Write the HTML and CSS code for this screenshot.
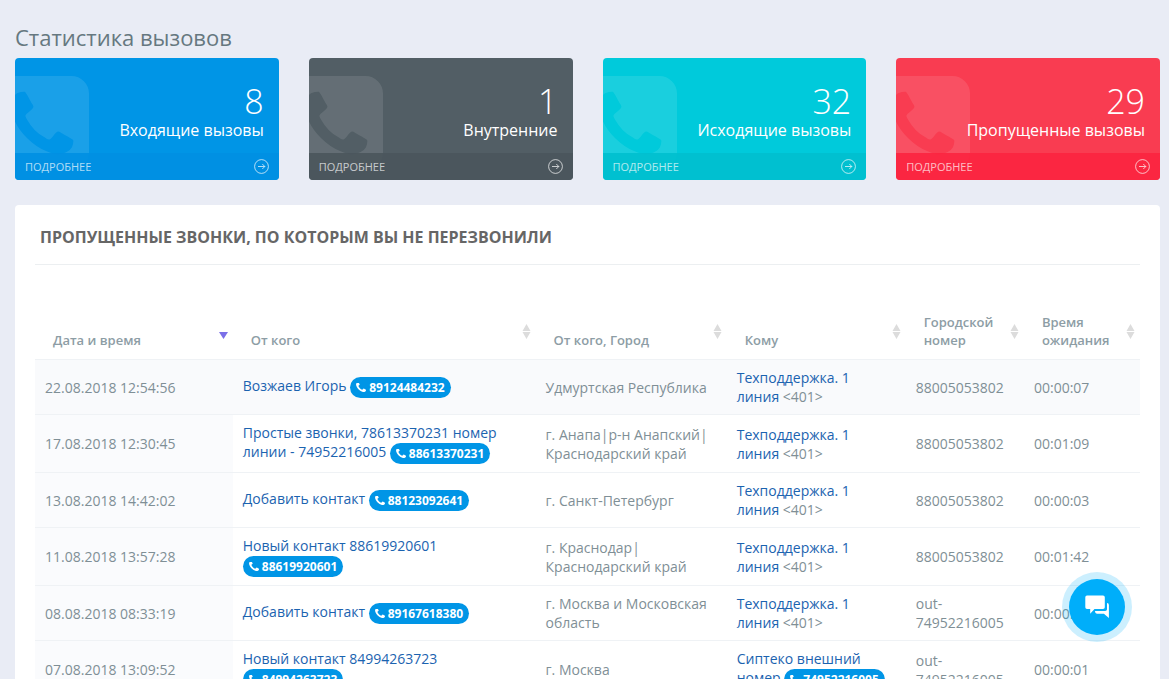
FILE: index.html
```html
<!DOCTYPE html>
<html lang="ru">
<head>
<meta charset="utf-8">
<meta name="viewport" content="width=device-width, initial-scale=1">
<title>Статистика вызовов</title>
<link rel="stylesheet" href="styles.css">
</head>
<body>
<svg class="sprite" aria-hidden="true">
  <symbol id="phone" viewBox="192 256 1408 1408"><path d="M1600 1240q0 27-10 70.5t-11 68.5q-21 50-122 106-94 51-186 51-27 0-53-3.5t-57-12.5-47-14.5-55.5-20.5-49.5-18q-98-35-175-83-127-79-264-216t-216-264q-48-77-83-175-3-9-18-49.5t-20.5-55.5-14.5-47-12.5-57-3.5-53q0-92 51-186 56-101 106-122 25-11 68.5-21t70.5-10q14 0 21 3 18 6 53 76 11 19 30 54t35 63.500 31 53.500q3 4 17.500 25t21.500 35.500 7 28.500q0 20-28.500 50t-62 55-62 53-28.500 46q0 9 5 22.500t8.500 20.500 14 24 11.500 19q76 137 174 235t235 174q2 1 19 11.500t24 14 20.500 8.500 22.500 5q18 0 46-28.500t53-62 55-62 50-28.500q14 0 28.500 7t35.500 21.500 25 17.500q25 15 53.500 31t63.500 35 54 30q70 35 76 53 3 7 3 21z"/></symbol>
  <symbol id="phone-square" viewBox="128 128 1536 1536"><path d="M1408 1193q0-11-2-16t-18-16.500-40.500-25-47.500-26.500-45.500-25-28.500-15q-5-3-19-13t-25-15-21-5q-15 0-36.500 20.500t-39.500 45-38.500 45-33.500 20.500q-7 0-16.500-3.500t-15.500-6.500-17-9.500-14-8.500q-99-55-170-126.500t-127-170.500q-2-3-8.500-14t-9.500-17-6.500-15.500-3.500-16.500q0-13 20.500-33.500t45-38.500 45-39.500 20.500-36.500q0-10-5-21t-15-25-13-19q-3-6-15-28.500t-25-45.500-26.500-47.500-25-40.500-16.500-18-16-2q-48 0-101 22-46 21-80 94.500t-34 130.500q0 16 2.500 34t5 30.500 9 33 10 29.500 12.500 33 11 30q60 164 216.500 320.500t320.500 216.500q6 2 30 11t33 12.500 29.500 10 33 9 30.500 5 34 2.500q57 0 130.500-34t94.500-80q22-53 22-101zm256-777v960q0 119-84.500 203.500t-203.500 84.500h-960q-119 0-203.500-84.500t-84.500-203.500v-960q0-119 84.500-203.500t203.500-84.500h960q119 0 203.500 84.500t84.500 203.500z"/></symbol>
  <symbol id="go" viewBox="0 0 15 15"><g fill="none" stroke="currentColor"><circle cx="7.500" cy="7.500" r="6.900"/><path d="M4 7.500h6.800M8.300 5l2.500 2.500L8.300 10"/></g></symbol>
  <symbol id="sort" viewBox="0 0 9 15"><path d="M4.500 0L8.500 7H.5zM4.500 15L8.500 8H.5z"/></symbol>
  <symbol id="sort-desc" viewBox="0 0 9 15"><path d="M4.500 15L9 8H0z"/></symbol>
</svg>

<main class="page">
  <h1 class="page-title">Статистика вызовов</h1>

  <section class="stats">
    <article class="stat stat-blue">
      <svg class="stat-icon" aria-hidden="true"><use href="#phone-square"/></svg>
      <div class="stat-body"><div class="stat-number">8</div><div class="stat-label">Входящие вызовы</div></div>
      <a class="stat-more" href="#">Подробнее <svg class="go" aria-hidden="true"><use href="#go"/></svg></a>
    </article>
    <article class="stat stat-grey">
      <svg class="stat-icon" aria-hidden="true"><use href="#phone-square"/></svg>
      <div class="stat-body"><div class="stat-number">1</div><div class="stat-label">Внутренние</div></div>
      <a class="stat-more" href="#">Подробнее <svg class="go" aria-hidden="true"><use href="#go"/></svg></a>
    </article>
    <article class="stat stat-cyan">
      <svg class="stat-icon" aria-hidden="true"><use href="#phone-square"/></svg>
      <div class="stat-body"><div class="stat-number">32</div><div class="stat-label">Исходящие вызовы</div></div>
      <a class="stat-more" href="#">Подробнее <svg class="go" aria-hidden="true"><use href="#go"/></svg></a>
    </article>
    <article class="stat stat-red">
      <svg class="stat-icon" aria-hidden="true"><use href="#phone-square"/></svg>
      <div class="stat-body"><div class="stat-number">29</div><div class="stat-label">Пропущенные вызовы</div></div>
      <a class="stat-more" href="#">Подробнее <svg class="go" aria-hidden="true"><use href="#go"/></svg></a>
    </article>
  </section>

  <section class="panel">
    <h2 class="panel-title">Пропущенные звонки, по которым вы не перезвонили</h2>
    <table class="calls">
      <colgroup><col class="col-date"><col class="col-from"><col class="col-city"><col class="col-to"><col class="col-line"><col class="col-wait"></colgroup>
      <thead>
        <tr>
          <th aria-sort="descending"><button class="sorter sorted" type="button"><span>Дата и время</span><svg class="sort" aria-hidden="true"><use href="#sort-desc"/></svg></button></th>
          <th><button class="sorter" type="button"><span>От кого</span><svg class="sort" aria-hidden="true"><use href="#sort"/></svg></button></th>
          <th><button class="sorter" type="button"><span>От кого, Город</span><svg class="sort" aria-hidden="true"><use href="#sort"/></svg></button></th>
          <th><button class="sorter" type="button"><span>Кому</span><svg class="sort" aria-hidden="true"><use href="#sort"/></svg></button></th>
          <th><button class="sorter" type="button"><span>Городской номер</span><svg class="sort" aria-hidden="true"><use href="#sort"/></svg></button></th>
          <th><button class="sorter" type="button"><span>Время ожидания</span><svg class="sort" aria-hidden="true"><use href="#sort"/></svg></button></th>
        </tr>
      </thead>
      <tbody>
        <tr class="active">
          <td>22.08.2018 12:54:56</td>
          <td><a href="#">Возжаев Игорь</a> <a class="call" href="#"><svg class="phone" aria-hidden="true"><use href="#phone"/></svg>89124484232</a></td>
          <td>Удмуртская Республика</td>
          <td><a href="#">Техподдержка. 1 линия</a>&nbsp;&lt;401&gt;</td>
          <td>88005053802</td>
          <td>00:00:07</td>
        </tr>
        <tr>
          <td>17.08.2018 12:30:45</td>
          <td><a href="#">Простые звонки, 78613370231 номер линии - 74952216005</a> <a class="call" href="#"><svg class="phone" aria-hidden="true"><use href="#phone"/></svg>88613370231</a></td>
          <td>г. Анапа|р-н Анапский|<wbr>Краснодарский край</td>
          <td><a href="#">Техподдержка. 1 линия</a>&nbsp;&lt;401&gt;</td>
          <td>88005053802</td>
          <td>00:01:09</td>
        </tr>
        <tr>
          <td>13.08.2018 14:42:02</td>
          <td><a href="#">Добавить контакт</a> <a class="call" href="#"><svg class="phone" aria-hidden="true"><use href="#phone"/></svg>88123092641</a></td>
          <td>г. Санкт-Петербург</td>
          <td><a href="#">Техподдержка. 1 линия</a>&nbsp;&lt;401&gt;</td>
          <td>88005053802</td>
          <td>00:00:03</td>
        </tr>
        <tr>
          <td>11.08.2018 13:57:28</td>
          <td><a href="#">Новый контакт 88619920601</a> <a class="call" href="#"><svg class="phone" aria-hidden="true"><use href="#phone"/></svg>88619920601</a></td>
          <td>г. Краснодар|<wbr>Краснодарский край</td>
          <td><a href="#">Техподдержка. 1 линия</a>&nbsp;&lt;401&gt;</td>
          <td>88005053802</td>
          <td>00:01:42</td>
        </tr>
        <tr>
          <td>08.08.2018 08:33:19</td>
          <td><a href="#">Добавить контакт</a> <a class="call" href="#"><svg class="phone" aria-hidden="true"><use href="#phone"/></svg>89167618380</a></td>
          <td>г. Москва и Московская область</td>
          <td><a href="#">Техподдержка. 1 линия</a>&nbsp;&lt;401&gt;</td>
          <td>out-<wbr>74952216005</td>
          <td>00:00:04</td>
        </tr>
        <tr>
          <td>07.08.2018 13:09:52</td>
          <td><a href="#">Новый контакт 84994263723</a> <a class="call" href="#"><svg class="phone" aria-hidden="true"><use href="#phone"/></svg>84994263723</a></td>
          <td>г. Москва</td>
          <td><a href="#">Сиптеко внешний номер</a> <a class="call" href="#"><svg class="phone" aria-hidden="true"><use href="#phone"/></svg>74952216005</a></td>
          <td>out-<wbr>74952216005</td>
          <td>00:00:01</td>
        </tr>
      </tbody>
    </table>
  </section>
</main>

<button class="chat" type="button" aria-label="Чат">
  <svg class="chat-icon" viewBox="0 0 24 24" aria-hidden="true"><path d="M2 .5h16q1.800 0 1.800 1.800v10q0 1.800-1.800 1.800H9.500L5.200 18.800V14.100H2Q.3 14.100.3 12.300v-10Q.3.500 2 .5zM22 8q1.900.2 1.900 2v13l-5-4.300h-7q-1.800 0-2-2.600h10.300q1.800 0 1.800-1.800z"/></svg>
</button>
</body>
</html>
```

FILE: styles.css
```css
* { box-sizing: border-box; }

body {
  margin: 0;
  background: #e9ecf5;
  color: #7f8f96;
  font: 14px/19px "Open Sans", "Noto Sans", sans-serif;
}

a { color: #1b63b0; text-decoration: none; }

.sprite { display: none; }

.page { padding: 20px 9px 20px 15px; }

.page-title {
  margin: 0 0 4px;
  color: #667880;
  font-size: 22px;
  font-weight: 400;
  line-height: 34px;
}

/* Stat cards */
.stats {
  display: grid;
  grid-template-columns: repeat(4, 1fr);
  gap: 30px;
  margin-bottom: 25px;
}

.stat {
  position: relative;
  display: flex;
  flex-direction: column;
  overflow: hidden;
  border-radius: 4px;
  color: #fff;
}

.stat-blue { background: #0095e6; --footer: #008fe2; }
.stat-grey { background: #525e65; --footer: #4a555c; }
.stat-cyan { background: #00cadb; --footer: #00bfce; }
.stat-red { background: #f93c51; --footer: #fb243f; }

.stat-icon {
  position: absolute;
  top: 18px;
  left: -20px;
  width: 94px;
  height: 94px;
  fill: #fff;
  opacity: .1;
}

.stat-body {
  padding: 25px 15px 12px;
  text-align: right;
}

.stat-number {
  font-size: 34px;
  font-weight: 300;
  line-height: 36px;
}

.stat-label {
  font-size: 16px;
  line-height: 22px;
}

.stat-more {
  position: relative;
  z-index: 1;
  display: flex;
  align-items: center;
  justify-content: space-between;
  padding: 6px 10px;
  color: rgba(255, 255, 255, .7);
  font-size: 11px;
  line-height: 15px;
  text-transform: uppercase;
}

.stat-more::before {
  content: "";
  position: absolute;
  inset: 0;
  z-index: -1;
  background: var(--footer);
  opacity: .9;
}

.go { width: 15px; height: 15px; }

/* Table panel */
.panel {
  padding: 12px 20px 20px;
  border-radius: 4px;
  background: #fff;
}

.panel-title {
  margin: 0 0 38px;
  padding: 9px 5px 16px;
  border-bottom: 1px solid #eceff1;
  color: #666;
  font-size: 16px;
  font-weight: 700;
  line-height: 22px;
  text-transform: uppercase;
}

.calls {
  width: 100%;
  table-layout: fixed;
  border-collapse: separate;
  border-spacing: 0;
}

.col-date { width: 17.9%; }
.col-from { width: 27.4%; }
.col-city { width: 17.3%; }
.col-to { width: 16.2%; }
.col-line { width: 10.7%; }
.col-wait { width: 10.5%; }

.calls th { padding: 0; }

.sorter {
  display: flex;
  align-items: center;
  justify-content: space-between;
  width: 100%;
  min-height: 56px;
  padding: 10px 5px 10px 18px;
  border: 0;
  background: none;
  color: #8d9da5;
  font: 600 13px/18px "Open Sans", "Noto Sans", sans-serif;
  text-align: left;
  cursor: pointer;
}

.sorter span { align-self: flex-end; }

.sort {
  flex: none;
  width: 9px;
  height: 15px;
  fill: #dcdcdc;
}

.sorted .sort { fill: #7b70e8; }

.calls td {
  padding: 8px 10px;
  border-top: 1px solid #eff2f5;
  vertical-align: middle;
}

.calls td:first-child { background: #fafbfd; }
.calls .active td { background: #f9fafc; }

.call {
  display: inline-block;
  padding: 3px 6px;
  border-radius: 11px;
  background: #0095e6;
  color: #fff;
  font-size: 12px;
  font-weight: 700;
  line-height: 15px;
  vertical-align: -1px;
  white-space: nowrap;
}

.phone {
  width: 10px;
  height: 10px;
  margin-right: 3px;
  fill: #fff;
  vertical-align: -1px;
}

/* Chat launcher */
.chat {
  position: fixed;
  right: 44px;
  bottom: 44px;
  display: flex;
  align-items: center;
  justify-content: center;
  width: 56px;
  height: 56px;
  padding: 0;
  border: 0;
  border-radius: 50%;
  background: #00aefa;
  box-shadow: 0 0 0 7px rgba(0, 174, 250, .2);
  cursor: pointer;
}

.chat-icon { width: 24px; height: 24px; fill: #fff; }
```
